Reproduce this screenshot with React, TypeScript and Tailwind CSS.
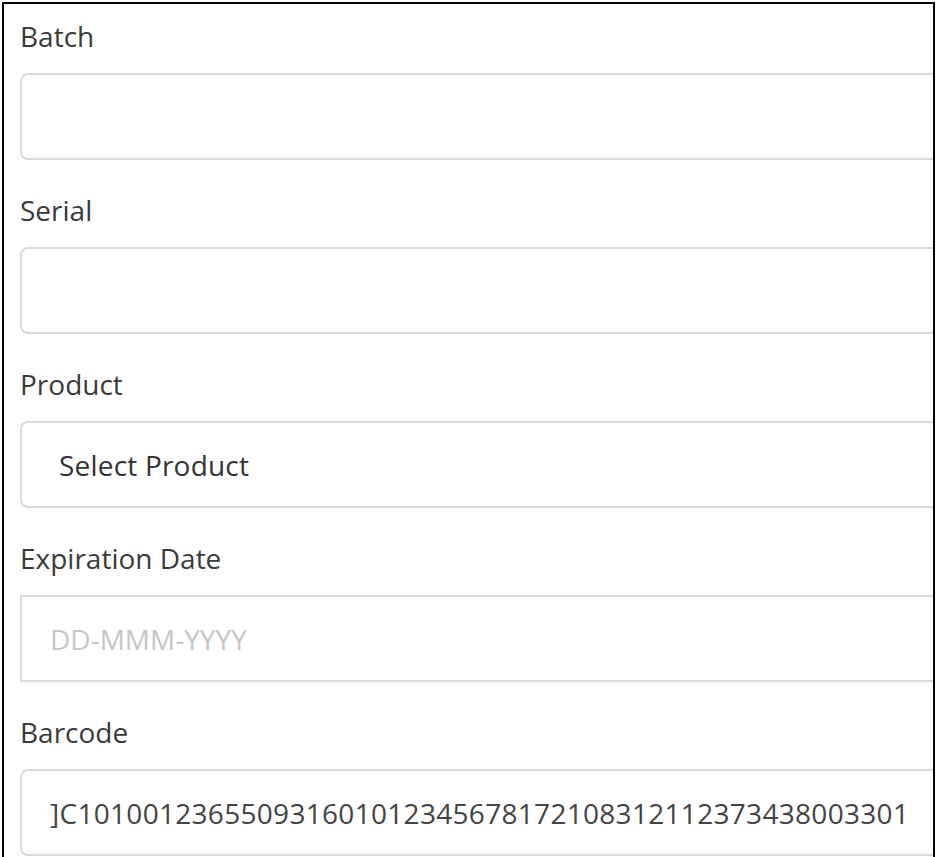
import React from "react";

const font = { fontFamily: '"Open Sans", "Liberation Sans", sans-serif' };

function Label({ children }: { children: React.ReactNode }) {
  return (
    <label className="block h-[40px] text-[28px] leading-[40px] text-[#3a3a3a] mb-[17px]">
      {children}
    </label>
  );
}

export default function App() {
  return (
    <div className="w-[938px] h-[857px] bg-white overflow-hidden" style={font}>
      <div className="ml-[2px] mr-[3px] mt-[2px] h-[855px] border-l-2 border-t-2 border-r-2 border-black overflow-hidden pl-4 pt-3">
        <div className="w-[calc(100%+40px)]">
          <div className="mb-[30px]">
            <Label>Batch</Label>
            <input
              readOnly
              className="block w-full h-[87px] border-2 border-[#dadada] rounded-[8px] bg-white px-[28px] text-[28px] text-[#444] outline-none"
              style={font}
            />
          </div>
          <div className="mb-[30px]">
            <Label>Serial</Label>
            <input
              readOnly
              className="block w-full h-[87px] border-2 border-[#dadada] rounded-[8px] bg-white px-[28px] text-[28px] text-[#444] outline-none"
              style={font}
            />
          </div>
          <div className="mb-[30px]">
            <Label>Product</Label>
            <div className="flex items-center w-full h-[87px] border-2 border-[#dadada] rounded-[8px] bg-white pl-[37px] text-[28px] tracking-[0.2px] text-[#333]">
              Select Product
            </div>
          </div>
          <div className="mb-[30px]">
            <Label>Expiration Date</Label>
            <input
              readOnly
              placeholder="DD-MMM-YYYY"
              className="block w-full h-[87px] border-2 border-[#dadada] bg-white px-[28px] text-[28px] text-[#444] outline-none placeholder:text-[#c6c6c6]"
              style={font}
            />
          </div>
          <div>
            <Label>Barcode</Label>
            <input
              readOnly
              defaultValue="]C101001236550931601012345678172108312112373438003301"
              className="block w-full h-[87px] border-2 border-[#dadada] rounded-[8px] bg-white px-[28px] text-[28px] tracking-[0.3px] text-[#444] outline-none"
              style={font}
            />
          </div>
        </div>
      </div>
    </div>
  );
}
